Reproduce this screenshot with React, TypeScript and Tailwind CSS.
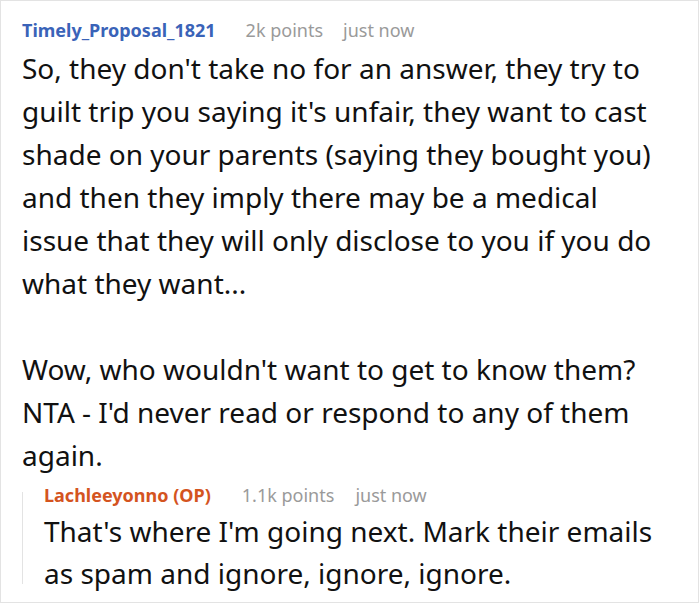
export default function App() {
  return (
    <div className="w-[699px] h-[603px] border border-[#e3e3e3] bg-white font-['Noto_Sans',sans-serif] text-[#111]">
      <div className="pl-[21px] pr-3 pt-[17px]">
        {/* ── main comment ── */}
        <div className="flex items-center h-6 text-[18px]">
          <span className="font-bold text-[#3a63b8] mr-[30px]">Timely_Proposal_1821</span>
          <span className="text-[#9a9a9a] mr-[20px]">2k points</span>
          <span className="text-[#9a9a9a]">just now</span>
        </div>
        <div className="mt-[5px] text-[28px] leading-[43px]">
          <p>
            So, they don't take no for an answer, they try to<br />
            guilt trip you saying it's unfair, they want to cast<br />
            shade on your parents (saying they bought you)<br />
            and then they imply there may be a medical<br />
            issue that they will only disclose to you if you do<br />
            what they want...
          </p>
          <p className="mt-[43px]">
            Wow, who wouldn't want to get to know them?<br />
            NTA - I'd never read or respond to any of them<br />
            again.
          </p>
        </div>

        {/* ── reply ── */}
        <div className="mt-[6px] flex">
          <div className="w-px bg-[#e3e3e3] mt-[9px] mb-[10px]" />
          <div className="pl-[21px]">
            <div className="flex items-center h-6 text-[18px]">
              <span className="font-bold text-[#d4541f] mr-[31px]">Lachleeyonno (OP)</span>
              <span className="text-[#9a9a9a] mr-[21px]">1.1k points</span>
              <span className="text-[#9a9a9a]">just now</span>
            </div>
            <p className="mt-[3px] text-[28px] leading-[42px]">
              That's where I'm going next. Mark their emails<br />
              as spam and ignore, ignore, ignore.
            </p>
          </div>
        </div>
      </div>
    </div>
  );
}
